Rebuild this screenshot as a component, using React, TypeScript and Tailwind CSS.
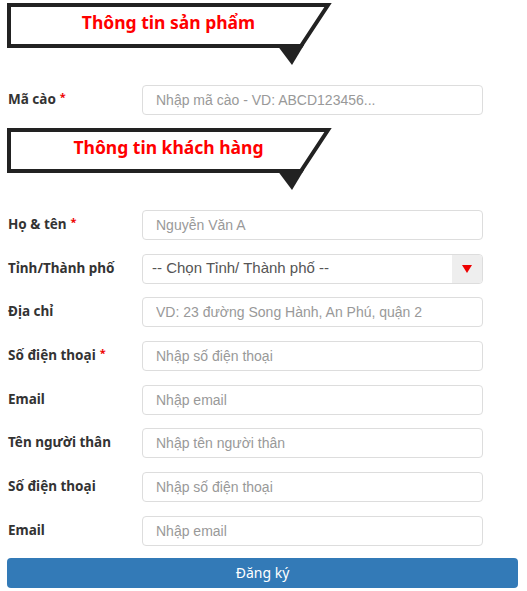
import React from "react";

const Banner = ({ title }: { title: string }) => (
  <div className="relative h-[68px]">
    <svg className="absolute left-0 top-0" width="340" height="68" viewBox="0 0 340 68">
      <polygon points="2,5 321,5 294,46 2,46" fill="#fff" stroke="#222" strokeWidth="4" strokeLinejoin="miter" />
      <polygon points="270,45 297,45 285,65" fill="#222" />
    </svg>
    <div className="relative w-[323px] pt-[10px] text-center text-[17.5px] leading-[24px] font-bold text-[#ff0000] [font-family:'Noto_Sans',sans-serif]">
      {title}
    </div>
  </div>
);

const Row = ({
  label,
  required,
  placeholder,
}: {
  label: string;
  required?: boolean;
  placeholder: string;
}) => (
  <div className="flex items-center h-[30px]">
    <label className="w-[135px] shrink-0 pl-[1px] -mt-[2px] text-[13.5px] font-bold text-[#333] [font-family:'Noto_Sans',sans-serif]">
      {label}
      {required && <span className="text-[#e00] ml-[4px] text-[11px] align-top">*</span>}
    </label>
    <input
      placeholder={placeholder}
      className="w-[341px] h-[30px] rounded-[4px] border border-[#ddd] px-[13px] text-[14px] text-[#555] placeholder:text-[#999] outline-none [font-family:'Liberation_Sans',Arial,sans-serif]"
    />
  </div>
);

export default function App() {
  return (
    <div className="w-[527px] h-[591px] bg-white px-[7px] overflow-hidden">
      <Banner title="Thông tin sản phẩm" />
      <div className="mt-[17px]">
        <Row label="Mã cào" required placeholder="Nhập mã cào - VD: ABCD123456..." />
      </div>
      <div className="mt-[10px]">
        <Banner title="Thông tin khách hàng" />
      </div>
      <div className="mt-[17px] flex flex-col gap-[13.7px]">
        <Row label="Họ & tên" required placeholder="Nguyễn Văn A" />
        <div className="flex items-center h-[30px]">
          <label className="w-[135px] shrink-0 pl-[1px] -mt-[2px] text-[13.5px] font-bold text-[#333] [font-family:'Noto_Sans',sans-serif]">
            Tỉnh/Thành phố
          </label>
          <div className="w-[341px] h-[30px] flex rounded-[4px] border border-[#ddd] overflow-hidden">
            <div className="flex-1 flex items-center pl-[9px] text-[15px] text-[#555] [font-family:'Liberation_Sans',Arial,sans-serif]">
              -- Chọn Tỉnh/ Thành phố --
            </div>
            <div className="w-[30px] bg-[#eee] flex items-center justify-center">
              <svg width="10" height="8" viewBox="0 0 10 8">
                <polygon points="0,0 10,0 5,8" fill="#e00" />
              </svg>
            </div>
          </div>
        </div>
        <Row label="Địa chỉ" placeholder="VD: 23 đường Song Hành, An Phú, quận 2" />
        <Row label="Số điện thoại" required placeholder="Nhập số điện thoại" />
        <Row label="Email" placeholder="Nhập email" />
        <Row label="Tên người thân" placeholder="Nhập tên người thân" />
        <Row label="Số điện thoại" placeholder="Nhập số điện thoại" />
        <Row label="Email" placeholder="Nhập email" />
      </div>
      <button className="mt-[12px] w-[511px] h-[30px] rounded-[4px] bg-[#337ab7] text-white text-[14px] [font-family:'Noto_Sans',sans-serif]">
        Đăng ký
      </button>
    </div>
  );
}
